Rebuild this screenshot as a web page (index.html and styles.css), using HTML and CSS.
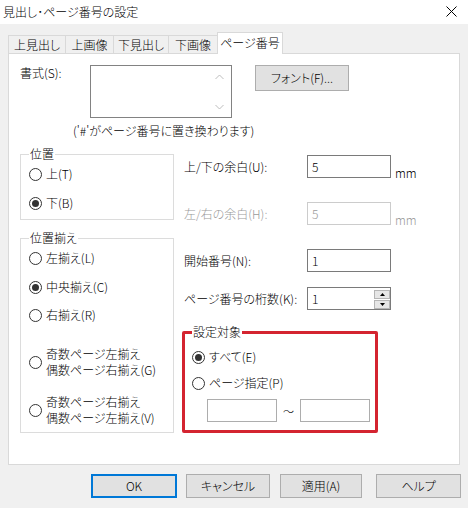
FILE: index.html
```html
<!DOCTYPE html>
<html lang="ja">
<head>
<meta charset="utf-8">
<title>見出し・ページ番号の設定</title>
<link rel="stylesheet" href="styles.css">
</head>
<body>
<div class="dialog">
  <div class="titlebar">
    <span class="title">見出し･ページ番号の設定</span>
    <svg class="close" width="11" height="11" viewBox="0 0 11 11"><path d="M0.5 0.5 L10.5 10.5 M10.5 0.5 L0.5 10.5" stroke="#000" stroke-width="1" fill="none"/></svg>
  </div>

  <div class="tabs">
    <div class="tab t1">上見出し</div>
    <div class="tab t2">上画像</div>
    <div class="tab t3">下見出し</div>
    <div class="tab t4">下画像</div>
    <div class="tab active t5">ページ番号</div>
  </div>

  <div class="panel">
    <div class="row-format">
      <span class="fmt-label">書式(S):</span>
      <div class="textarea">
        <div class="scroll">
          <svg width="9" height="6" viewBox="0 0 9 6"><path d="M0.5 5 L4.5 1 L8.5 5" stroke="#bdbdbd" stroke-width="1" fill="none"/></svg>
          <svg width="9" height="6" viewBox="0 0 9 6"><path d="M0.5 1 L4.5 5 L8.5 1" stroke="#bdbdbd" stroke-width="1" fill="none"/></svg>
        </div>
      </div>
      <button class="btn font-btn">フォント(F)...</button>
    </div>
    <div class="hint">('#'がページ番号に置き換わります)</div>

    <div class="cols">
      <div class="left">
        <fieldset class="group g-pos">
          <legend>位置</legend>
          <div class="radio p1"><span class="circle"></span>上(T)</div>
          <div class="radio p2"><span class="circle on"></span>下(B)</div>
        </fieldset>
        <fieldset class="group g-align">
          <legend>位置揃え</legend>
          <div class="radio a1"><span class="circle"></span>左揃え(L)</div>
          <div class="radio a2"><span class="circle on"></span>中央揃え(C)</div>
          <div class="radio a3"><span class="circle"></span>右揃え(R)</div>
          <div class="radio two a4"><span class="circle"></span><span>奇数ページ左揃え<br>偶数ページ右揃え(G)</span></div>
          <div class="radio two a5"><span class="circle"></span><span>奇数ページ右揃え<br>偶数ページ左揃え(V)</span></div>
        </fieldset>
      </div>

      <div class="right">
        <div class="field f1">
          <span class="flabel">上/下の余白(U):</span>
          <div class="input">5</div>
          <span class="unit">mm</span>
        </div>
        <div class="field f2 disabled">
          <span class="flabel">左/右の余白(H):</span>
          <div class="input">5</div>
          <span class="unit">mm</span>
        </div>
        <div class="field f3">
          <span class="flabel">開始番号(N):</span>
          <div class="input">1</div>
        </div>
        <div class="field f4">
          <span class="flabel">ページ番号の桁数(K):</span>
          <div class="input spin-input">
            <span>1</span>
            <div class="spinner">
              <div class="spin-btn"><svg width="5" height="3" viewBox="0 0 5 3"><path d="M0 3 L2.5 0 L5 3 Z" fill="#000"/></svg></div>
              <div class="spin-btn"><svg width="5" height="3" viewBox="0 0 5 3"><path d="M0 0 L2.5 3 L5 0 Z" fill="#000"/></svg></div>
            </div>
          </div>
        </div>

        <fieldset class="target">
          <legend>設定対象</legend>
          <div class="radio s1"><span class="circle on"></span>すべて(E)</div>
          <div class="radio s2"><span class="circle"></span>ページ指定(P)</div>
          <div class="range">
            <div class="rinput"></div>
            <span class="tilde">～</span>
            <div class="rinput"></div>
          </div>
        </fieldset>
      </div>
    </div>
  </div>

  <div class="buttons">
    <button class="btn b-ok">OK</button>
    <button class="btn b-cancel">キャンセル</button>
    <button class="btn b-apply">適用(A)</button>
    <button class="btn b-help">ヘルプ</button>
  </div>
</div>
</body>
</html>
```

FILE: styles.css
```css
* { box-sizing: border-box; }

body {
  margin: 0;
  width: 468px;
  height: 508px;
  overflow: hidden;
  background: #f0f0f0;
  font-family: "Noto Sans CJK JP", "Noto Sans", sans-serif;
  font-size: 12px;
  font-weight: 300;
  line-height: 16px;
  color: #000;
  font-feature-settings: "palt";
}

.titlebar {
  height: 24px;
  background: #fff;
  display: flex;
  align-items: center;
  justify-content: space-between;
  padding: 0 11px 0 3px;
}
.title { font-size: 12px; }
.close { display: block; margin-top: -1px; }

.tabs {
  display: flex;
  align-items: flex-end;
  height: 21px;
  margin: 8px 0 0 8px;
}
.tab {
  height: 18px;
  border: 1px solid #d9d9d9;
  border-bottom: none;
  border-right: none;
  background: #f0f0f0;
  display: flex;
  align-items: center;
  justify-content: center;
  padding-top: 1px;
}
.tab.active {
  height: 22px;
  margin-bottom: -1px;
  background: #fff;
  border-right: 1px solid #d9d9d9;
  position: relative;
  z-index: 1;
  padding-top: 0;
  padding-bottom: 2px;
}
.t1 { width: 57px; }
.t2 { width: 48px; }
.t3 { width: 55px; }
.t4 { width: 49px; }
.t5 { width: 66px; }

.panel {
  margin-left: 8px;
  width: 452px;
  height: 412px;
  background: #fff;
  border: 1px solid #d9d9d9;
  padding: 11px 0 0 11px;
}

.row-format {
  display: flex;
  align-items: flex-start;
}
.fmt-label { width: 70px; }
.textarea {
  width: 142px;
  height: 53px;
  border: 1px solid #828282;
  display: flex;
  justify-content: flex-end;
}
.scroll {
  width: 15px;
  margin-right: 4px;
  display: flex;
  flex-direction: column;
  justify-content: space-between;
  align-items: center;
  padding: 8px 0 7px;
}
.scroll svg { display: block; }

.btn {
  font-family: inherit;
  font-size: 12px;
  font-weight: 300;
  font-feature-settings: "palt";
  line-height: 16px;
  color: #000;
  background: #e1e1e1;
  border: 1px solid #adadad;
  padding: 0;
  margin: 0;
}
.font-btn {
  width: 94px;
  height: 26px;
  margin-left: 23px;
}

.hint { margin: 5px 0 0 53px; }

.cols {
  display: grid;
  grid-template-columns: 154px 260px;
  column-gap: 10px;
}

fieldset {
  margin: 0;
  min-width: 0;
}
legend {
  padding: 0 1px;
  line-height: 16px;
}

.group {
  width: 154px;
  border: 1px solid #dcdcdc;
  padding: 0 0 8px 8px;
}
.g-pos { margin-top: 7px; }
.g-align { margin-top: 10px; padding-bottom: 6px; }

.radio {
  display: flex;
  align-items: center;
  gap: 4px;
  height: 16px;
}
.radio.two {
  height: 32px;
  line-height: 16px;
}
.circle {
  width: 13px;
  height: 13px;
  flex: none;
  border: 1px solid #333;
  border-radius: 50%;
  background: #fff;
  display: flex;
  align-items: center;
  justify-content: center;
}
.circle.on::after {
  content: "";
  width: 7px;
  height: 7px;
  border-radius: 50%;
  background: #333;
}

.p1 { margin-top: 4px; }
.p2 { margin-top: 13px; }

.a1 { margin-top: 4px; }
.a2 { margin-top: 13px; }
.a3 { margin-top: 12px; }
.a4 { margin-top: 23px; }
.a5 { margin-top: 16px; }

.field {
  display: flex;
  align-items: center;
  height: 23px;
}
.flabel { width: 123px; }
.input {
  width: 84px;
  height: 23px;
  border: 1px solid #7a7a7a;
  padding-left: 4px;
  display: flex;
  align-items: center;
  background: #fff;
}
.unit {
  align-self: flex-end;
  margin: 0 0 -3px 4px;
}
.disabled { color: #9a9a9a; }
.disabled .input { border-color: #cccccc; }

.f1 { margin-top: 16px; }
.f2 { margin-top: 24px; }
.f3 { margin-top: 24px; }
.f4 { margin-top: 15px; }

.spin-input {
  justify-content: space-between;
  padding-right: 0;
}
.spinner {
  width: 16px;
  height: 19px;
  display: flex;
  flex-direction: column;
  gap: 1px;
  margin-top: 1px;
}
.spin-btn {
  flex: 1;
  background: #e6e6e6;
  border: 1px solid #b5b5b5;
  display: flex;
  align-items: center;
  justify-content: center;
}
.spin-btn svg { display: block; }

.target {
  width: 196px;
  margin: 14px 0 0 -2px;
  border: 3px solid #d42430;
  border-radius: 2px;
  padding: 0 0 8px 7px;
}
.s1 { margin-top: 9px; }
.s2 { margin-top: 10px; }
.range {
  display: flex;
  align-items: center;
  margin: 8px 0 0 15px;
}
.rinput {
  width: 70px;
  height: 23px;
  border: 1px solid #adadad;
  background: #fff;
}
.tilde {
  width: 23px;
  text-align: center;
  font-size: 11px;
}

.buttons {
  display: flex;
  margin-top: 9px;
}
.buttons .btn { height: 24px; }
.b-ok {
  width: 86px;
  margin-left: 91px;
  border: 2px solid #0078d7;
}
.b-cancel { width: 84px; margin-left: 9px; }
.b-apply { width: 82px; margin-left: 10px; }
.b-help { width: 85px; margin-left: 14px; }
```
